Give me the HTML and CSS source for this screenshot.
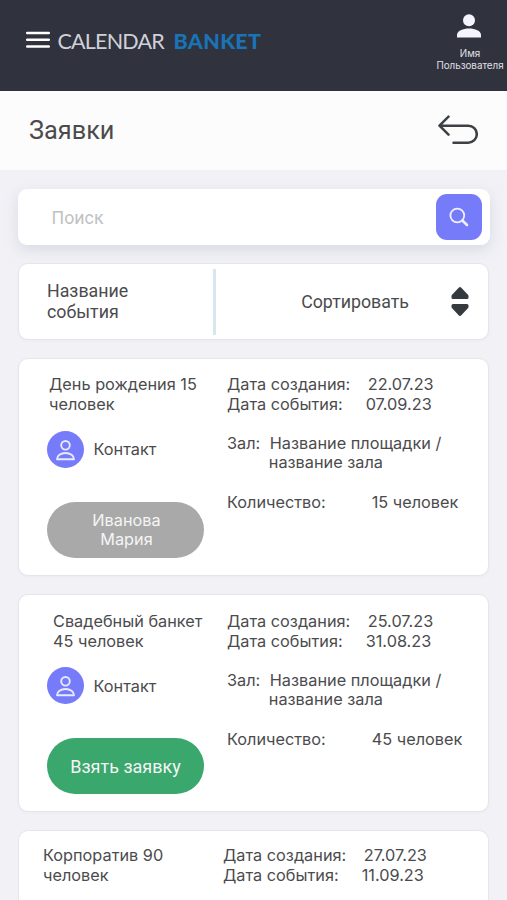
FILE: index.html
```html
<!DOCTYPE html>
<html lang="ru">
<head>
<meta charset="utf-8">
<title>Заявки</title>
<link rel="stylesheet" href="styles.css">
</head>
<body>
<header class="topbar">
  <svg class="menu" width="24" height="17" viewBox="0 0 24 17"><path d="M1.2 2h21.600M1.200 8.800h21.600M1.200 15.600h21.600" stroke="#fff" stroke-width="2.500" stroke-linecap="round"/></svg>
  <div class="logo"><span class="logo-first">CALENDAR</span><span class="logo-second">BANKET</span></div>
  <div class="user">
    <svg class="user-icon" width="24" height="24" viewBox="0 0 24 24" fill="#f4f4ff"><circle cx="12" cy="6.200" r="6"/><path d="M0 23.500v-2.800C0 16.800 6 14.400 12 14.400s12 2.400 12 6.300v2.800z"/></svg>
    <span class="user-name">Имя<br>Пользователя</span>
  </div>
</header>
<div class="heading">
  <h1>Заявки</h1>
  <svg width="40" height="30" viewBox="0 0 40 30" fill="none" stroke="#3d4145" stroke-width="2.500" stroke-linecap="round" stroke-linejoin="round"><path d="M10.500 1.700 1.500 10.700l9 9M1.500 10.700h28.800a8.400 8.400 0 0 1 0 17H15.500"/></svg>
</div>
<main>
  <div class="search">
    <span>Поиск</span>
    <div class="search-button"><svg width="20" height="20" viewBox="0 0 20 20" fill="none" stroke="#eef0ff" stroke-linecap="round"><circle cx="8.300" cy="8.500" r="6.900" stroke-width="1.800"/><path d="m13.400 13.500 4.600 4.500" stroke-width="2.600"/></svg></div>
  </div>
  <div class="filter">
    <div class="filter-name">Название<br>события</div>
    <div class="filter-sort"><span>Сортировать</span>
      <svg width="18" height="31" viewBox="0 0 18 31" fill="#343a3e" stroke="#343a3e" stroke-width="3" stroke-linejoin="round"><path d="M9 2.500 2 10v1.500h14V10zM2 19.500V21l7 7.500 7-7.500v-1.500z"/></svg>
    </div>
  </div>
  <article class="card">
    <div class="left">
      <h2>День рождения 15<br>человек</h2>
      <div class="contact"><i class="avatar"><svg width="20" height="22" viewBox="0 0 20 22" fill="none" stroke="#e8eaff" stroke-width="1.900" stroke-linejoin="round"><circle cx="9.500" cy="6.300" r="4.300"/><path d="M1 20.200C1 16.700 4.700 14 9.500 14s8.500 2.700 8.500 6.200z"/></svg></i><span>Контакт</span></div>
      <div class="button taken">Иванова<br>Мария</div>
    </div>
    <div class="details">
      <div class="row"><span>Дата создания:</span><span class="created">22.07.23</span></div>
      <div class="row"><span>Дата события:</span><span class="event">07.09.23</span></div>
      <div class="row hall"><span>Зал:</span><span class="place">Название площадки /<br><span class="room">название зала</span></span></div>
      <div class="row"><span>Количество:</span><span class="count">15 человек</span></div>
    </div>
  </article>
  <article class="card wedding">
    <div class="left">
      <h2>Свадебный банкет<br>45 человек</h2>
      <div class="contact"><i class="avatar"><svg width="20" height="22" viewBox="0 0 20 22" fill="none" stroke="#e8eaff" stroke-width="1.900" stroke-linejoin="round"><circle cx="9.500" cy="6.300" r="4.300"/><path d="M1 20.200C1 16.700 4.700 14 9.500 14s8.500 2.700 8.500 6.200z"/></svg></i><span>Контакт</span></div>
      <div class="button free">Взять заявку</div>
    </div>
    <div class="details">
      <div class="row"><span>Дата создания:</span><span class="created">25.07.23</span></div>
      <div class="row"><span>Дата события:</span><span class="event">31.08.23</span></div>
      <div class="row hall"><span>Зал:</span><span class="place">Название площадки /<br><span class="room">название зала</span></span></div>
      <div class="row"><span>Количество:</span><span class="count">45 человек</span></div>
    </div>
  </article>
  <article class="card corporate">
    <div class="left"><h2>Корпоратив 90<br>человек</h2></div>
    <div class="details">
      <div class="row"><span>Дата создания:</span><span class="created">27.07.23</span></div>
      <div class="row"><span>Дата события:</span><span class="event">11.09.23</span></div>
    </div>
  </article>
</main>
</body>
</html>
```
FILE: styles.css
```css
* { box-sizing: border-box; }
body {
  margin: 0;
  height: 900px;
  overflow: hidden;
  background: #f1f1f6;
  color: #4b4b4d;
  font-family: Inter, sans-serif;
}
svg { display: block; flex: none; }
.topbar {
  display: flex;
  height: 91px;
  padding-left: 26px;
  background: #30323e;
}
.menu { margin-top: 31px; }
.logo {
  display: flex;
  gap: 9px;
  margin: 28px 0 0 7.500px;
  font: 21.500px/26px Lato, sans-serif;
  white-space: nowrap;
}
.logo-first { width: 107px; color: #d0d1d8; font-weight: 400; letter-spacing: -.8px; }
.logo-second { color: #1973b5; font-weight: 900; letter-spacing: .3px; }
.user {
  display: flex;
  flex-direction: column;
  align-items: center;
  width: 70px;
  margin: 14px 2px 0 auto;
}
.user-icon { margin-right: 3px; }
.user-name {
  margin-top: 10px;
  color: #e0e0e6;
  font-size: 9.800px;
  line-height: 12px;
  text-align: center;
}
.heading {
  display: flex;
  justify-content: space-between;
  height: 79px;
  padding: 24px 29px 0;
  background: #fcfcfc;
}
h1 {
  margin: 0;
  font: 25.300px/32px Roboto, sans-serif;
}
main { padding: 19px 17px 0 18px; }
.search {
  display: flex;
  justify-content: space-between;
  align-items: center;
  height: 56px;
  padding: 0 8px 0 33.500px;
  border-radius: 9px;
  background: #fff;
  box-shadow: 0 5px 14px #c9c9d899;
  color: #c1c1c3;
  font: 17.800px/24px Roboto, sans-serif;
}
.search span { padding-top: 2px; }
.search-button {
  display: grid;
  place-items: center;
  width: 46px;
  height: 46px;
  border-radius: 11px;
  background: #767bfa;
}
.filter, .card {
  display: flex;
  margin-right: 1px;
  border: 1px solid #e3e6ec;
  border-radius: 10px;
  background: #fff;
  box-shadow: 0 1px 2px #dfe3e860;
}
.filter {
  align-items: center;
  height: 77px;
  margin-top: 18px;
  padding: 0 19px 0 28px;
  font: 17.800px/21px Roboto, sans-serif;
}
.filter-name {
  display: flex;
  align-items: center;
  width: 169px;
  height: 66px;
  padding-bottom: 1px;
  border-right: 3px solid #d9e6ed;
}
.filter-sort {
  display: flex;
  flex: 1;
  justify-content: flex-end;
  align-items: center;
  gap: 42px;
}
.card {
  height: 218px;
  margin-top: 18px;
  padding: 16px 0 0 28px;
  font-size: 16.300px;
  line-height: 19.600px;
  white-space: nowrap;
}
.left { width: 180px; }
h2 { margin: 0 0 0 2px; font: inherit; }
.contact { display: flex; align-items: center; gap: 9.500px; margin-top: 17px; }
.contact span { padding-top: 1px; }
.avatar {
  display: grid;
  place-items: center;
  width: 37px;
  height: 37px;
  border-radius: 50%;
  background: #767bfa;
}
.button {
  display: grid;
  place-items: center;
  width: 157px;
  height: 56px;
  margin-top: 34px;
  border-radius: 28px;
  color: #f5f5f5;
  text-align: center;
}
.taken { padding-left: 2px; background: #a9a9a9; }
.free { padding-top: 1px; background: #3aa76d; font: 18px/21px Roboto, sans-serif; }
.row { display: flex; }
.created { margin-left: 17.500px; }
.event { margin-left: 23px; }
.hall { margin: 19.600px 0; }
.place { margin-left: 9.500px; }
.room { margin-left: -1px; }
.count { margin-left: 46px; }
.wedding { padding-top: 17px; }
.wedding h2 { margin-left: 6px; }
.wedding .contact { margin-top: 16px; }
.wedding .contact span { padding-top: 3px; }
.corporate {
  height: 70px;
  padding: 15px 0 0 24px;
  border-bottom: 0;
  border-radius: 10px 10px 0 0;
  box-shadow: none;
}
.corporate h2 { margin-left: 0; }
```
